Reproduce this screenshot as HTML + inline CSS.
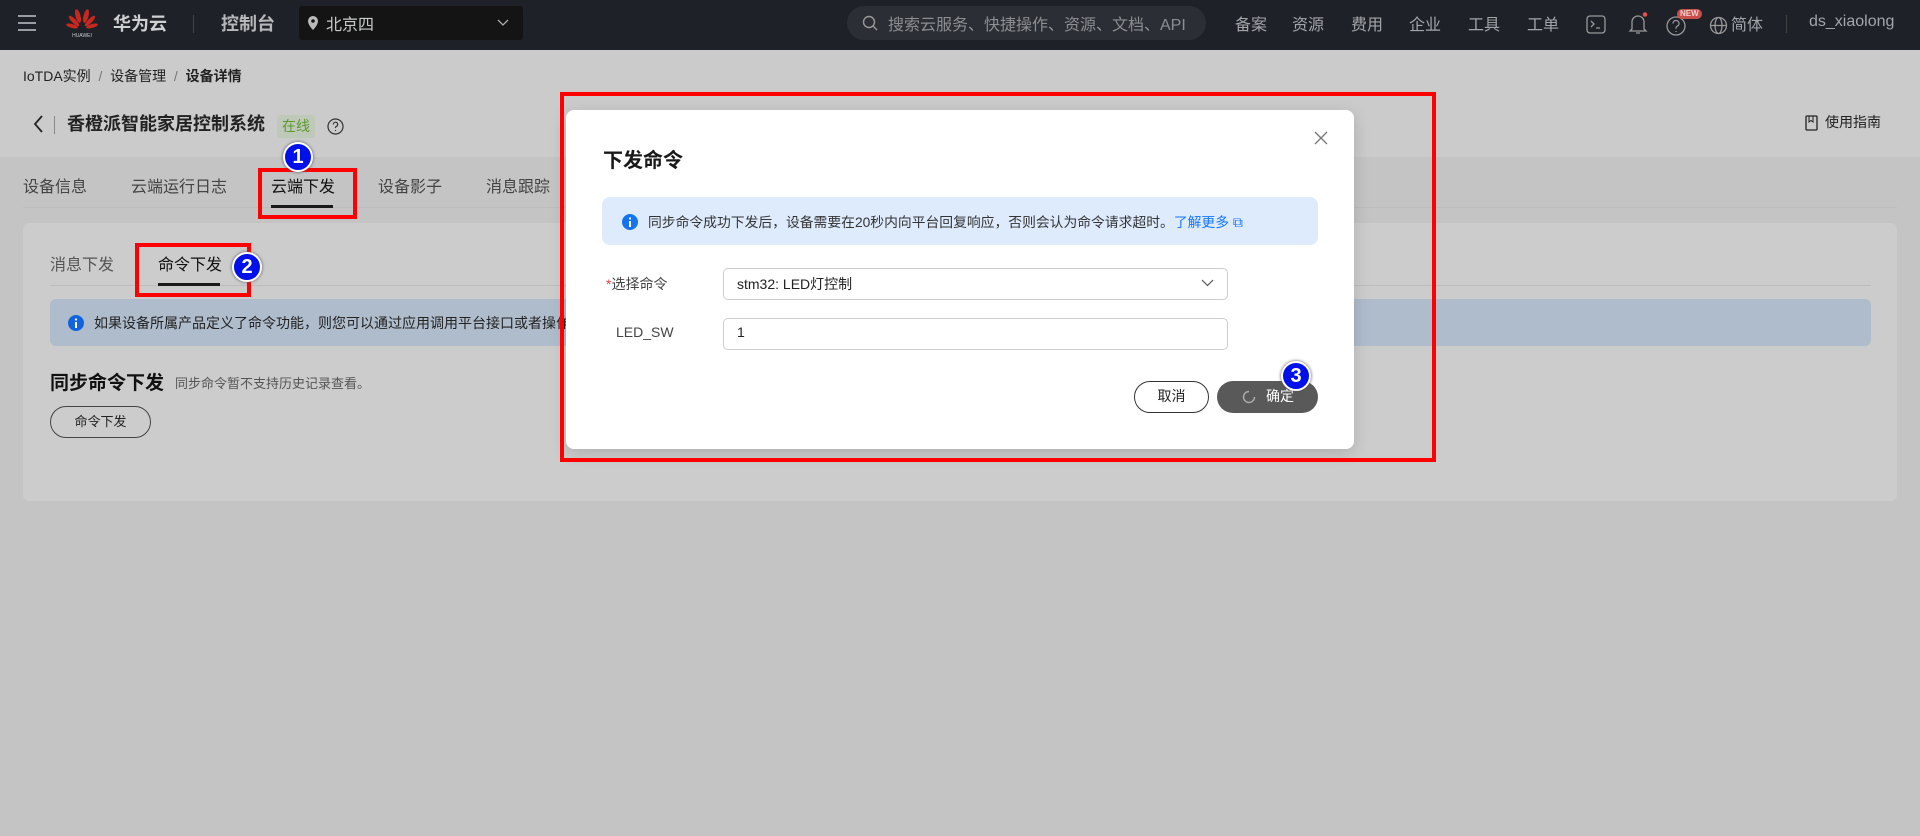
<!DOCTYPE html>
<html><head><meta charset="utf-8"><style>
*{box-sizing:border-box;margin:0;padding:0}
body{width:1920px;height:836px;overflow:hidden;background:#c4c4c4;font-family:"Liberation Sans","Noto Sans CJK SC",sans-serif;position:relative;color:#191919}
.a{position:absolute;white-space:nowrap}
.top{position:absolute;left:0;top:0;width:1920px;height:50px;background:#1f2129}
.nav{color:#a3a5a9;font-size:16px;top:11px}
.badge{position:absolute;width:30px;height:30px;border-radius:50%;background:#0010e8;border:2px solid #fff;color:#fff;font-weight:bold;font-size:20px;text-align:center;line-height:26px;box-shadow:0 0 3px #555}
.red{position:absolute;border:4px solid #f00}
</style></head><body>
<div class="top"></div>
<div class="a" style="left:18px;top:15px;width:18px;height:2px;background:#9a9ca0;box-shadow:0 7px 0 #9a9ca0,0 14px 0 #9a9ca0"></div>
<svg class="a" style="left:66px;top:8px" width="32" height="30" viewBox="0 0 32 30"><g fill="#c8281e"><ellipse cx="12" cy="8" rx="2.5" ry="7" transform="rotate(-15 12 8)"/><ellipse cx="20" cy="8" rx="2.5" ry="7" transform="rotate(15 20 8)"/><ellipse cx="8" cy="13" rx="2.2" ry="7" transform="rotate(-45 8 13)"/><ellipse cx="24" cy="13" rx="2.2" ry="7" transform="rotate(45 24 13)"/><ellipse cx="6" cy="18" rx="2" ry="6" transform="rotate(-75 6 18)"/><ellipse cx="26" cy="18" rx="2" ry="6" transform="rotate(75 26 18)"/></g><text x="16" y="29" font-size="5" fill="#ccc" text-anchor="middle" font-family="Liberation Sans">HUAWEI</text></svg>
<div class="a" style="left:113px;top:10px;color:#cfd0d2;font-size:18px;font-weight:bold">华为云</div>
<div class="a" style="left:193px;top:15px;width:1px;height:18px;background:#444"></div>
<div class="a" style="left:221px;top:10px;color:#b6b7b9;font-size:18px;font-weight:bold">控制台</div>
<div class="a" style="left:299px;top:6px;width:224px;height:34px;background:#141414;border-radius:3px"></div>
<svg class="a" style="left:307px;top:15px" width="12" height="16" viewBox="0 0 12 16"><path d="M6 1a5 5 0 0 0-5 5c0 4 5 9 5 9s5-5 5-9a5 5 0 0 0-5-5z" fill="#bbb"/><circle cx="6" cy="6" r="1.8" fill="#141414"/></svg>
<div class="a nav" style="left:326px;color:#c9cacc">北京四</div>
<svg class="a" style="left:497px;top:19px" width="12" height="8"><path d="M1 1l5 5 5-5" stroke="#aaa" fill="none" stroke-width="1.3"/></svg>
<div class="a" style="left:847px;top:6px;width:359px;height:34px;background:#2c2e35;border-radius:17px"></div>
<svg class="a" style="left:862px;top:15px" width="16" height="16"><circle cx="7" cy="7" r="5.5" stroke="#999" stroke-width="1.4" fill="none"/><path d="M11 11l4 4" stroke="#999" stroke-width="1.4"/></svg>
<div class="a nav" style="left:888px;color:#8c8e92">搜索云服务、快捷操作、资源、文档、API</div>
<div class="a nav" style="left:1235px">备案</div><div class="a nav" style="left:1292px">资源</div><div class="a nav" style="left:1351px">费用</div><div class="a nav" style="left:1409px">企业</div><div class="a nav" style="left:1468px">工具</div><div class="a nav" style="left:1527px">工单</div>
<svg class="a" style="left:1586px;top:15px" width="20" height="19"><rect x="1" y="1" width="18" height="17" rx="3" stroke="#999" fill="none" stroke-width="1.3"/><path d="M5 6l3 3-3 3M10 13h4" stroke="#999" fill="none" stroke-width="1.3"/></svg>
<svg class="a" style="left:1628px;top:12px" width="20" height="24"><path d="M4 17V10a6 6 0 0 1 12 0v7l2 2H2z M8 21h4" stroke="#999" fill="none" stroke-width="1.3"/><circle cx="17" cy="2.5" r="2.3" fill="#e0524a"/></svg>
<svg class="a" style="left:1666px;top:15px" width="22" height="22"><circle cx="10" cy="11" r="9" stroke="#999" fill="none" stroke-width="1.3"/><path d="M7 8.5a3 3 0 1 1 4 2.8c-1 .5-1 1.5-1 2.5M10 16v1" stroke="#999" fill="none" stroke-width="1.3"/></svg>
<div class="a" style="left:1677px;top:9px;background:#c9504a;color:#f2d0ce;font-size:8px;font-weight:bold;border-radius:5px;padding:0 3px;line-height:10px">NEW</div>
<svg class="a" style="left:1709px;top:16px" width="19" height="19"><circle cx="9.5" cy="9.5" r="8" stroke="#999" fill="none" stroke-width="1.3"/><ellipse cx="9.5" cy="9.5" rx="3.5" ry="8" stroke="#999" fill="none" stroke-width="1.3"/><path d="M1.5 9.5h16" stroke="#999" stroke-width="1.3"/></svg>
<div class="a nav" style="left:1731px">简体</div>
<div class="a" style="left:1786px;top:15px;width:1px;height:18px;background:#444"></div>
<div class="a nav" style="left:1809px;top:13px">ds_xiaolong</div>

<div class="a" style="left:0;top:50px;width:1920px;height:107px;background:#cbcbcb"></div>
<div class="a" style="left:23px;top:66px;font-size:14px;color:#222">IoTDA实例 <span style="color:#777">&nbsp;/&nbsp;</span> 设备管理 <span style="color:#777">&nbsp;/&nbsp;</span> <b>设备详情</b></div>
<svg class="a" style="left:32px;top:114px" width="12" height="20"><path d="M10 2L3 10l7 8" stroke="#222" fill="none" stroke-width="1.8"/></svg>
<div class="a" style="left:54px;top:116px;width:1px;height:18px;background:#888"></div>
<div class="a" style="left:67px;top:110px;font-size:18px;font-weight:bold;color:#222">香橙派智能家居控制系统</div>
<div class="a" style="left:277px;top:115px;width:38px;height:23px;background:#bfc9b9;border-radius:3px;color:#5c9a2c;font-size:14px;text-align:center;line-height:22px">在线</div>
<svg class="a" style="left:326px;top:117px" width="19" height="19"><circle cx="9.5" cy="9.5" r="7.5" stroke="#333" fill="none" stroke-width="1.2"/><path d="M7.3 7.5a2.2 2.2 0 1 1 2.8 2c-.6.3-.6.8-.6 1.6M9.5 13v1" stroke="#333" fill="none" stroke-width="1.2"/></svg>
<svg class="a" style="left:1805px;top:115px" width="13" height="17"><rect x="1" y="1" width="11" height="14" rx="1" stroke="#222" fill="none" stroke-width="1.3"/><path d="M4 1v6l2-1.5L8 7V1" stroke="#222" fill="none" stroke-width="1"/></svg>
<div class="a" style="left:1825px;top:112px;font-size:14px;color:#222">使用指南</div>

<div class="a" style="top:173px;left:23px;font-size:16px;color:#444">设备信息</div>
<div class="a" style="top:173px;left:131px;font-size:16px;color:#444">云端运行日志</div>
<div class="a" style="top:173px;left:271px;font-size:16px;color:#111">云端下发</div>
<div class="a" style="top:173px;left:378px;font-size:16px;color:#444">设备影子</div>
<div class="a" style="top:173px;left:486px;font-size:16px;color:#444">消息跟踪</div>
<div class="a" style="left:23px;top:207px;width:1874px;height:1px;background:#bdbdbd"></div>
<div class="a" style="left:271px;top:205px;width:62px;height:3px;background:#191919"></div>

<div class="a" style="left:23px;top:223px;width:1874px;height:278px;background:#cccccc;border-radius:6px"></div>
<div class="a" style="top:251px;left:50px;font-size:16px;color:#555">消息下发</div>
<div class="a" style="top:251px;left:158px;font-size:16px;color:#111">命令下发</div>
<div class="a" style="left:50px;top:285px;width:1821px;height:1px;background:#bdbdbd"></div>
<div class="a" style="left:158px;top:283px;width:62px;height:3px;background:#191919"></div>
<div class="a" style="left:50px;top:299px;width:1821px;height:47px;background:#aebccc;border-radius:6px"></div>
<svg class="a" style="left:68px;top:315px" width="16" height="16"><circle cx="8" cy="8" r="8" fill="#1363e0"/><rect x="7" y="7" width="2" height="6" fill="#fff"/><circle cx="8" cy="4.5" r="1.1" fill="#fff"/></svg>
<div class="a" style="left:94px;top:313px;font-size:14px;color:#222">如果设备所属产品定义了命令功能，则您可以通过应用调用平台接口或者操作下发命令</div>
<div class="a" style="left:50px;top:368px;font-size:19px;font-weight:bold;color:#111">同步命令下发</div>
<div class="a" style="left:175px;top:373px;font-size:13px;color:#555">同步命令暂不支持历史记录查看。</div>
<div class="a" style="left:50px;top:406px;width:101px;height:32px;border:1px solid #444;border-radius:16px;font-size:13px;text-align:center;line-height:29px;color:#222">命令下发</div>

<div class="red" style="left:258px;top:168px;width:99px;height:51px"></div>
<div class="red" style="left:135px;top:243px;width:116px;height:54px"></div>

<div class="a" style="left:566px;top:110px;width:788px;height:339px;background:#fff;border-radius:8px;box-shadow:0 4px 16px rgba(0,0,0,.15)"></div>
<div class="a" style="left:603px;top:144px;font-size:20px;font-weight:bold;color:#191919">下发命令</div>
<svg class="a" style="left:1314px;top:131px" width="14" height="14"><path d="M1 1l12 12M13 1L1 13" stroke="#777" stroke-width="1.3"/></svg>
<div class="a" style="left:602px;top:197px;width:716px;height:48px;background:#deebfd;border-radius:8px"></div>
<svg class="a" style="left:622px;top:214px" width="16" height="16"><circle cx="8" cy="8" r="8" fill="#1474f0"/><rect x="7" y="7" width="2" height="6" fill="#fff"/><circle cx="8" cy="4.5" r="1.1" fill="#fff"/></svg>
<div class="a" style="left:648px;top:211px;font-size:13.8px;color:#333">同步命令成功下发后，设备需要在20秒内向平台回复响应，否则会认为命令请求超时。<span style="color:#1476ff">了解更多 ⧉</span></div>
<div class="a" style="left:606px;top:274px;font-size:14px;color:#444"><span style="color:#e54545">*</span>选择命令</div>
<div class="a" style="left:723px;top:268px;width:505px;height:32px;border:1px solid #ccc;border-radius:5px"></div>
<div class="a" style="left:737px;top:274px;font-size:14px;color:#222">stm32: LED灯控制</div>
<svg class="a" style="left:1201px;top:279px" width="13" height="8"><path d="M1 1l5.5 5.5L12 1" stroke="#555" fill="none" stroke-width="1.2"/></svg>
<div class="a" style="left:616px;top:324px;font-size:14px;color:#444">LED_SW</div>
<div class="a" style="left:723px;top:318px;width:505px;height:32px;border:1px solid #ccc;border-radius:5px"></div>
<div class="a" style="left:737px;top:324px;font-size:14px;color:#222">1</div>
<div class="a" style="left:1134px;top:381px;width:75px;height:32px;border:1px solid #333;border-radius:16px;font-size:14px;text-align:center;line-height:28px;color:#222">取消</div>
<div class="a" style="left:1217px;top:381px;width:101px;height:32px;background:#595959;border-radius:16px"></div>
<svg class="a" style="left:1242px;top:390px" width="14" height="14"><path d="M7 1.5a5.5 5.5 0 1 0 5.5 5.5" stroke="#aaa" fill="none" stroke-width="1.5"/></svg>
<div class="a" style="left:1266px;top:386px;font-size:14px;color:#fff">确定</div>
<div class="red" style="left:560px;top:92px;width:876px;height:370px"></div>

<div class="badge" style="left:283px;top:142px">1</div>
<div class="badge" style="left:232px;top:252px">2</div>
<div class="badge" style="left:1281px;top:361px">3</div>
</body></html>
